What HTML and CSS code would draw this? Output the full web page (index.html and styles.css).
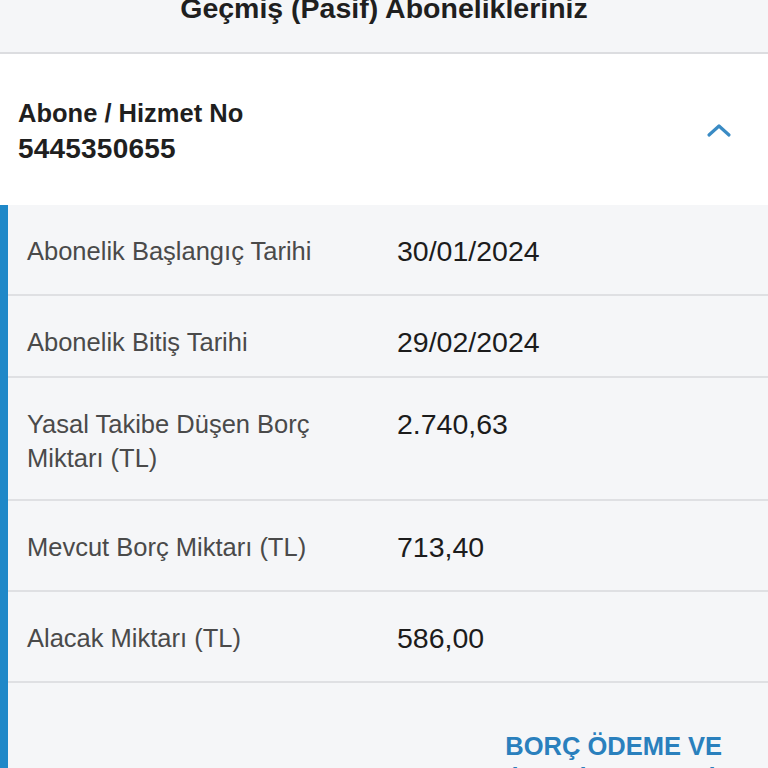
FILE: index.html
```html
<!DOCTYPE html>
<html lang="tr">
<head>
<meta charset="utf-8">
<link rel="stylesheet" href="styles.css">
</head>
<body>
<header class="page-head">
  <h1 class="page-title">Geçmiş (Pasif) Abonelikleriniz</h1>
</header>
<section class="sub-card">
  <div class="sub-summary">
    <div class="sub-id">
      <div class="sub-id-label">Abone / Hizmet No</div>
      <div class="sub-id-number">5445350655</div>
    </div>
    <svg class="chevron" width="26" height="16" viewBox="0 0 26 16">
      <path d="M3 13 L13 4 L23 13" fill="none" stroke="#3a8bc4" stroke-width="3.2" stroke-linecap="round" stroke-linejoin="round"/>
    </svg>
  </div>
  <div class="sub-details">
    <div class="row row-a">
      <div class="label">Abonelik Başlangıç Tarihi</div>
      <div class="value">30/01/2024</div>
    </div>
    <div class="row row-b">
      <div class="label">Abonelik Bitiş Tarihi</div>
      <div class="value">29/02/2024</div>
    </div>
    <div class="row row-c">
      <div class="label">Yasal Takibe Düşen Borç<br>Miktarı (TL)</div>
      <div class="value">2.740,63</div>
    </div>
    <div class="row row-a">
      <div class="label">Mevcut Borç Miktarı (TL)</div>
      <div class="value">713,40</div>
    </div>
    <div class="row row-a">
      <div class="label">Alacak Miktarı (TL)</div>
      <div class="value">586,00</div>
    </div>
    <div class="actions">
      <a class="action-link">BORÇ ÖDEME VE<br>İADE İŞLEMLERİ</a>
    </div>
  </div>
</section>
</body>
</html>
```
FILE: styles.css
```css
html, body {
  margin: 0;
  padding: 0;
  background: #ffffff;
  font-family: "Liberation Sans", Arial, sans-serif;
  overflow: hidden;
}
.page-head {
  display: flow-root;
  background: #f5f6f8;
  border-bottom: 2px solid #dcdde0;
  height: 54px;
  box-sizing: border-box;
  text-align: center;
}
.page-title {
  margin: -8px 0 0 0;
  font-size: 28.5px;
  line-height: 32px;
  font-weight: bold;
  color: #1f1f1f;
}
.sub-summary {
  display: flex;
  align-items: center;
  justify-content: space-between;
  height: 151px;
  padding: 0 36px 0 18px;
  background: #ffffff;
}
.sub-id {
  font-weight: bold;
  line-height: 35px;
  color: #1f1f1f;
  padding-top: 2px;
}
.sub-id-label {
  font-size: 25.5px;
}
.sub-id-number {
  font-size: 28px;
  letter-spacing: 0.2px;
}
.sub-details {
  background: #f5f6f8;
  border-left: 8px solid #1f88c8;
  min-height: 600px;
}
.row {
  display: flex;
  align-items: flex-start;
  border-bottom: 2px solid #dfe0e3;
  padding: 29px 0 26px 19px;
  line-height: 34px;
}
.row-b {
  padding-bottom: 17px;
}
.row-c {
  padding-bottom: 24px;
}
.label {
  width: 370px;
  font-size: 25.5px;
  color: #4a4a4a;
}
.value {
  font-size: 28.5px;
  color: #1c1c1c;
}
.actions {
  display: flex;
  justify-content: flex-end;
  padding: 46px 46px 0 0;
}
.action-link {
  font-size: 25.5px;
  line-height: 34px;
  font-weight: bold;
  color: #2a80bd;
  text-align: center;
}
```
